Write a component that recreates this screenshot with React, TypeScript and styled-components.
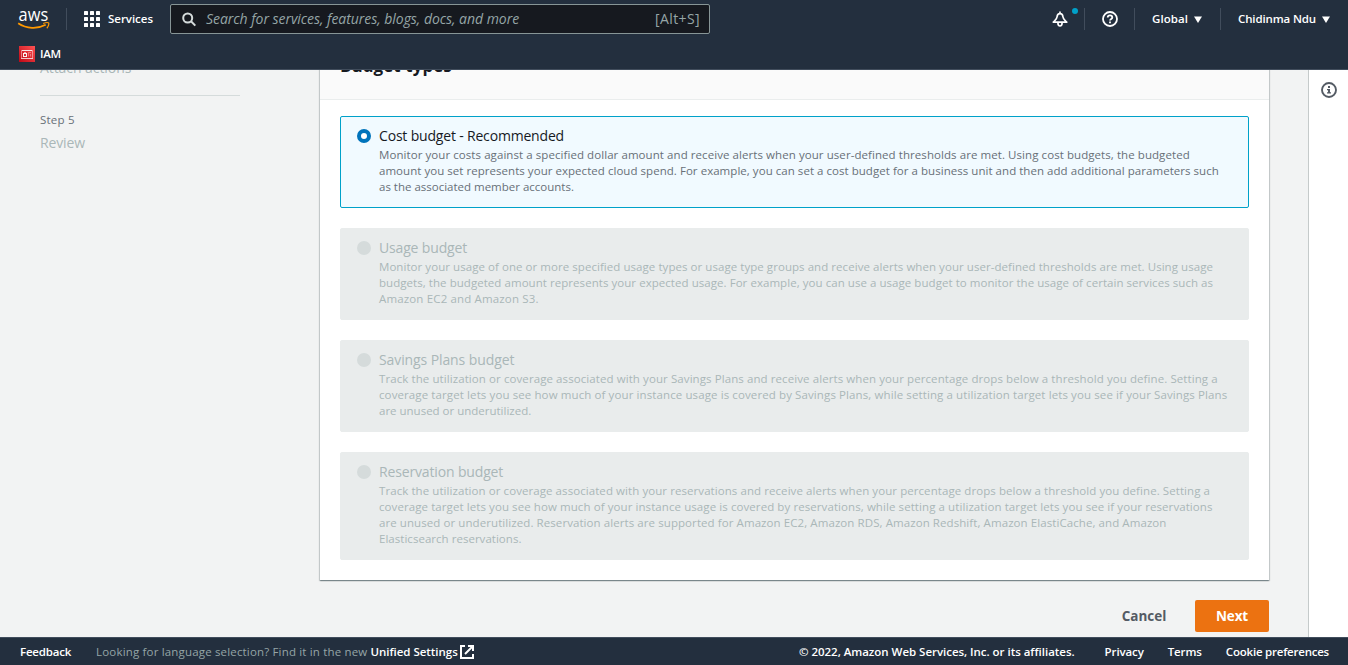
import React from 'react';
import styled, { createGlobalStyle } from 'styled-components';

const GlobalStyle = createGlobalStyle`
  * { box-sizing: border-box; }
  html, body { margin: 0; padding: 0; overflow: hidden; }
  body {
    font-family: 'Open Sans', 'Noto Sans', sans-serif;
    font-size: 14px;
    line-height: 22px;
    color: #16191f;
    background: #f2f3f3;
  }
  svg { display: block; flex: none; }
`;

const Page = styled.div`
  display: flex;
  flex-direction: column;
  width: 1348px;
  height: 665px;
`;

/* Single line of text; $track tunes the letter spacing of the line. */
const Text = styled.span<{ $track?: number }>`
  white-space: nowrap;
  letter-spacing: ${(p) => p.$track ?? 0}px;
`;

/* ---------- header ---------- */

const Header = styled.header`
  flex: none;
  height: 70px;
  background: #232f3e;
  border-bottom: 1px solid #414d5c;
  color: #fff;
`;

const NavRow = styled.div`
  display: flex;
  align-items: center;
  justify-content: space-between;
  height: 38px;
  font-size: 11.5px;
  font-weight: 600;
`;

const NavGroup = styled.div`
  display: flex;
  align-items: center;
  height: 38px;
`;

const LogoLink = styled.a`
  display: flex;
  width: 66px;
  padding-left: 17px;
`;

const Divider = styled.i`
  width: 1px;
  height: 22px;
  background: #414d5c;
`;

const ServicesButton = styled.div`
  display: flex;
  align-items: center;
  gap: 8px;
  width: 103px;
  padding-left: 17px;
`;

const SearchBox = styled.div`
  display: flex;
  align-items: center;
  width: 540px;
  height: 30px;
  padding: 0 9px 0 11px;
  border: 1px solid #879596;
  border-radius: 2px;
  background: #16191f;
  color: #95a5a6;
  font-size: 14px;
  font-weight: 400;
`;

const Placeholder = styled(Text)`
  flex: 1;
  margin-left: 9px;
  font-style: italic;
`;

const IconCell = styled.div<{ $width: number }>`
  position: relative;
  display: flex;
  justify-content: center;
  width: ${(p) => p.$width}px;
`;

const NoticeDot = styled.i`
  position: absolute;
  top: -3px;
  right: 6px;
  width: 6px;
  height: 6px;
  border-radius: 50%;
  background: #00a1c9;
`;

const NavMenu = styled.div<{ $width: number }>`
  display: flex;
  align-items: center;
  justify-content: space-between;
  width: ${(p) => p.$width}px;
  padding: 0 18px 0 17px;
`;

const FavoritesRow = styled.div`
  display: flex;
  align-items: center;
  gap: 5px;
  height: 31px;
  padding-left: 19px;
  font-size: 11.5px;
  line-height: 18px;
  font-weight: 600;
`;

/* ---------- body ---------- */

const Body = styled.div`
  display: flex;
  flex: 1;
  min-height: 0;
  overflow: hidden;
`;

const Steps = styled.nav`
  width: 320px;
  margin-top: -13px;
  padding-left: 40px;
`;

const StepName = styled.div`
  height: 22px;
  color: #aab7b8;
`;

const StepNumber = styled.div`
  height: 22px;
  margin-bottom: 1px;
  font-size: 11.5px;
  color: #687078;
`;

const StepRule = styled.hr`
  width: 200px;
  height: 1px;
  margin: 16px 0 13px;
  border: 0;
  background: #d5dbdb;
`;

const Content = styled.main`
  width: 949px;
  margin-top: -16px;
`;

const Panel = styled.section`
  background: #fff;
  box-shadow: 0 1px 1px 0 rgba(0, 28, 36, 0.3), 1px 1px 1px 0 rgba(0, 28, 36, 0.15),
    -1px 1px 1px 0 rgba(0, 28, 36, 0.15);
`;

const PanelHeader = styled.h2`
  height: 46px;
  margin: 0;
  padding: 0 20px;
  border-bottom: 1px solid #eaeded;
  background: #fafafa;
  font-size: 17px;
  line-height: 24px;
  font-weight: 700;
`;

const Tiles = styled.div`
  display: flex;
  flex-direction: column;
  gap: 20px;
  padding: 16px 20px 20px;
`;

const Tile = styled.label<{ $selected?: boolean }>`
  display: flex;
  padding: 8px 16px 12px;
  border: 1px solid ${(p) => (p.$selected ? '#00a1c9' : '#e9ecec')};
  border-radius: 2px;
  background: ${(p) => (p.$selected ? '#f1faff' : '#e9ecec')};
  color: ${(p) => (p.$selected ? '#16191f' : '#aab7b8')};
`;

const Radio = styled.i<{ $selected?: boolean }>`
  flex: none;
  width: 14px;
  height: 14px;
  margin: 4px 8px 0 0;
  border: ${(p) => (p.$selected ? '4px solid #0073bb' : '0')};
  border-radius: 50%;
  background: ${(p) => (p.$selected ? '#fff' : '#d5dbdb')};
`;

const TileText = styled.div`
  display: flex;
  flex-direction: column;
`;

const Description = styled.div<{ $selected?: boolean }>`
  display: flex;
  flex-direction: column;
  font-size: 11.5px;
  line-height: 16px;
  color: ${(p) => (p.$selected ? '#687078' : '#aab7b8')};
`;

const Actions = styled.div`
  display: flex;
  justify-content: flex-end;
  margin-top: 20px;
`;

const Button = styled.button<{ $primary?: boolean }>`
  height: 32px;
  width: ${(p) => (p.$primary ? 74 : 102)}px;
  padding: 0;
  border: 0;
  border-radius: 2px;
  background: ${(p) => (p.$primary ? '#ec7211' : 'transparent')};
  color: ${(p) => (p.$primary ? '#fff' : '#545b64')};
  font: inherit;
  font-size: 13.5px;
  font-weight: 700;
`;

const Tools = styled.aside`
  width: 40px;
  margin-left: auto;
  padding: 12px 0 0 12px;
  border-left: 1px solid #c5caca;
  background: #fff;
`;

/* ---------- footer ---------- */

const Footer = styled.footer`
  display: flex;
  flex: none;
  align-items: center;
  justify-content: space-between;
  height: 28px;
  padding: 1px 19px 0 20px;
  border-top: 1px solid #414d5c;
  background: #232f3e;
  color: #fff;
  font-size: 11.5px;
  font-weight: 600;
`;

const FooterGroup = styled.div<{ $gap: number }>`
  display: flex;
  align-items: center;
  gap: ${(p) => p.$gap}px;
`;

const LanguageHint = styled.div`
  display: flex;
  align-items: center;
  gap: 2px;
`;

const Muted = styled(Text)`
  margin-right: 1px;
  font-weight: 400;
  color: #95a5a6;
`;

/* ---------- icons ---------- */

const AwsLogo = () => (
  <svg width="34" height="24" viewBox="0 0 34 24">
    <text
      x="1.6"
      y="14"
      fill="#fff"
      fontFamily="'Open Sans', sans-serif"
      fontSize="18"
      fontWeight="500"
      textLength="29.6"
      lengthAdjust="spacingAndGlyphs"
    >
      aws
    </text>
    <path d="M1.200 16.200C9.500 21.900 20.500 22.200 28.700 17.800" fill="none" stroke="#f90" strokeWidth="1.700" />
    <path d="M26.200 16.500C28.500 15.600 31.200 15.500 31.700 16C32.200 16.700 31.300 19.800 29.800 21.200" fill="none" stroke="#f90" strokeWidth="1.200" />
  </svg>
);

const GridIcon = () => (
  <svg width="16" height="16" viewBox="0 0 16 16" fill="#fff">
    {[0, 6, 12].map((y) =>
      [0, 6, 12].map((x) => <rect key={`${x}-${y}`} x={x} y={y} width="4" height="4" rx="0.6" />),
    )}
  </svg>
);

const SearchIcon = () => (
  <svg width="15" height="15" viewBox="0 0 15 15" fill="none" stroke="#d5dbdb" strokeWidth="2">
    <circle cx="5.700" cy="6" r="4.500" />
    <path d="M9 9.300L13.300 13.600" />
  </svg>
);

const BellIcon = () => (
  <svg width="16" height="16" viewBox="0 0 16 16" fill="none" stroke="#fff" strokeWidth="1.700" strokeLinejoin="round">
    <path d="M8 0.500V2.200M8 2.600C6.300 2.600 5.200 4 5.100 5.800C5 7.900 3.600 9 1.300 11.200H14.700C12.400 9 11 7.900 10.900 5.800C10.800 4 9.700 2.600 8 2.600Z" />
    <path d="M5.900 11.800C5.900 14 6.900 15 8 15S10.100 14 10.100 11.800" />
  </svg>
);

const HelpIcon = () => (
  <svg width="16" height="16" viewBox="0 0 16 16" fill="none" stroke="#fff" strokeWidth="1.800">
    <circle cx="8" cy="8" r="7" />
    <path d="M5.700 6.600C5.700 5.200 6.700 4.400 8 4.400S10.300 5.200 10.300 6.400C10.300 7.900 8 7.900 8 9.600" />
    <path d="M8 10.600V12.300" />
  </svg>
);

const Caret = () => (
  <svg width="8" height="7" viewBox="0 0 8 7" fill="#fff">
    <path d="M0 0.500H8L4 7Z" />
  </svg>
);

const IamIcon = () => (
  <svg width="16" height="16" viewBox="0 0 16 16">
    <defs>
      <linearGradient id="iam" x1="0" y1="1" x2="1" y2="0">
        <stop offset="0" stopColor="#bd0816" />
        <stop offset="1" stopColor="#ff5252" />
      </linearGradient>
    </defs>
    <rect width="16" height="16" fill="url(#iam)" />
    <g fill="none" stroke="#fff" strokeWidth="1">
      <path d="M2.500 12V4.500H13.500V12" strokeOpacity="0.450" />
      <path d="M3 4.500H13M2 12.500H14" strokeOpacity="0.750" />
      <rect x="4.500" y="7.500" width="3" height="3" strokeOpacity="0.950" />
      <path d="M5 6.500H7" strokeOpacity="0.600" />
      <path d="M12 6.500H9.500V10.500M11.500 8V10.500" strokeOpacity="0.350" />
    </g>
  </svg>
);

const InfoIcon = () => (
  <svg width="16" height="16" viewBox="0 0 16 16">
    <circle cx="8" cy="8" r="7" fill="none" stroke="#545b64" strokeWidth="1.900" />
    <path d="M7 4H9V6H7ZM6 7H9V10.200H10V11.600H6V10.200H7V8.300H6Z" fill="#545b64" />
  </svg>
);

const ExternalIcon = () => (
  <svg width="14" height="14" viewBox="0 0 14 14" fill="none" stroke="#fff" strokeWidth="2">
    <path d="M5 1H1V13H13V9" />
    <path d="M8 1H13V6M12.500 1.500L5 9" />
  </svg>
);

/* ---------- data ---------- */

type Line = [text: string, track: number];

interface Option {
  title: Line;
  selected?: boolean;
  lines: Line[];
}

const options: Option[] = [
  {
    title: ['Cost budget - Recommended', -0.18],
    selected: true,
    lines: [
      ['Monitor your costs against a specified dollar amount and receive alerts when your user-defined thresholds are met. Using cost budgets, the budgeted', 0.07],
      ['amount you set represents your expected cloud spend. For example, you can set a cost budget for a business unit and then add additional parameters such', 0.041],
      ['as the associated member accounts.', -0.005],
    ],
  },
  {
    title: ['Usage budget', -0.16],
    lines: [
      ['Monitor your usage of one or more specified usage types or usage type groups and receive alerts when your user-defined thresholds are met. Using usage', 0.054],
      ['budgets, the budgeted amount represents your expected usage. For example, you can use a usage budget to monitor the usage of certain services such as', 0.051],
      ['Amazon EC2 and Amazon S3.', 0.15],
    ],
  },
  {
    title: ['Savings Plans budget', -0.1],
    lines: [
      ['Track the utilization or coverage associated with your Savings Plans and receive alerts when your percentage drops below a threshold you define. Setting a', 0.086],
      ['coverage target lets you see how much of your instance usage is covered by Savings Plans, while setting a utilization target lets you see if your Savings Plans', 0.105],
      ['are unused or underutilized.', -0.005],
    ],
  },
  {
    title: ['Reservation budget', -0.15],
    lines: [
      ['Track the utilization or coverage associated with your reservations and receive alerts when your percentage drops below a threshold you define. Setting a', 0.072],
      ['coverage target lets you see how much of your instance usage is covered by reservations, while setting a utilization target lets you see if your reservations', 0.082],
      ['are unused or underutilized. Reservation alerts are supported for Amazon EC2, Amazon RDS, Amazon Redshift, Amazon ElastiCache, and Amazon', 0.078],
      ['Elasticsearch reservations.', 0.03],
    ],
  },
];

export default function App() {
  return (
    <Page>
      <GlobalStyle />
      <Header>
        <NavRow>
          <NavGroup>
            <LogoLink>
              <AwsLogo />
            </LogoLink>
            <Divider />
            <ServicesButton>
              <GridIcon />
              <Text $track={-0.03}>Services</Text>
            </ServicesButton>
            <SearchBox>
              <SearchIcon />
              <Placeholder $track={-0.04}>Search for services, features, blogs, docs, and more</Placeholder>
              <Text $track={0.4}>[Alt+S]</Text>
            </SearchBox>
          </NavGroup>
          <NavGroup>
            <IconCell $width={48}>
              <BellIcon />
              <NoticeDot />
            </IconCell>
            <Divider />
            <IconCell $width={49}>
              <HelpIcon />
            </IconCell>
            <Divider />
            <NavMenu $width={85}>
              <Text $track={0.08}>Global</Text>
              <Caret />
            </NavMenu>
            <Divider />
            <NavMenu $width={127}>
              <Text $track={-0.13}>Chidinma Ndu</Text>
              <Caret />
            </NavMenu>
          </NavGroup>
        </NavRow>
        <FavoritesRow>
          <IamIcon />
          <Text $track={-0.3}>IAM</Text>
        </FavoritesRow>
      </Header>

      <Body>
        <Steps>
          <StepName>
            <Text $track={-0.07}>Attach actions</Text>
          </StepName>
          <StepRule />
          <StepNumber>
            <Text $track={0.22}>Step 5</Text>
          </StepNumber>
          <StepName>
            <Text $track={-0.15}>Review</Text>
          </StepName>
        </Steps>

        <Content>
          <Panel>
            <PanelHeader>
              <Text $track={0.06}>Budget types</Text>
            </PanelHeader>
            <Tiles>
              {options.map((o) => (
                <Tile key={o.title[0]} $selected={o.selected}>
                  <Radio $selected={o.selected} />
                  <TileText>
                    <Text $track={o.title[1]}>{o.title[0]}</Text>
                    <Description $selected={o.selected}>
                      {o.lines.map(([text, track]) => (
                        <Text key={text} $track={track}>
                          {text}
                        </Text>
                      ))}
                    </Description>
                  </TileText>
                </Tile>
              ))}
            </Tiles>
          </Panel>
          <Actions>
            <Button>
              <Text>Cancel</Text>
            </Button>
            <Button $primary>
              <Text $track={-0.1}>Next</Text>
            </Button>
          </Actions>
        </Content>

        <Tools>
          <InfoIcon />
        </Tools>
      </Body>

      <Footer>
        <FooterGroup $gap={25}>
          <Text $track={-0.2}>Feedback</Text>
          <LanguageHint>
            <Muted $track={0.17}>Looking for language selection? Find it in the new</Muted>
            <Text $track={-0.03}>Unified Settings</Text>
            <ExternalIcon />
          </LanguageHint>
        </FooterGroup>
        <FooterGroup $gap={30}>
          <Text $track={-0.03}>© 2022, Amazon Web Services, Inc. or its affiliates.</Text>
          <FooterGroup $gap={24}>
            <Text $track={-0.12}>Privacy</Text>
            <Text $track={-0.1}>Terms</Text>
            <Text $track={-0.22}>Cookie preferences</Text>
          </FooterGroup>
        </FooterGroup>
      </Footer>
    </Page>
  );
}
